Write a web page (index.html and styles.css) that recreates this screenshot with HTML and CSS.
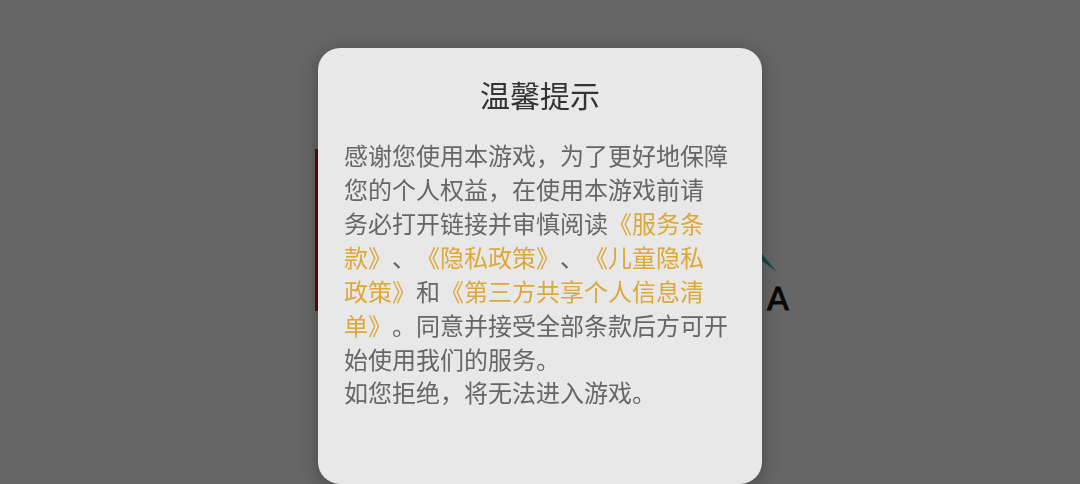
FILE: index.html
```html
<!DOCTYPE html>
<html lang="zh-CN">
<head>
  <meta charset="UTF-8" />
  <meta name="viewport" content="width=device-width, initial-scale=1" />
  <title>温馨提示</title>
  <link rel="stylesheet" href="styles.css">
</head>
<body>
  <!-- Splash logo behind the dialog -->
  <div class="splash">
    <svg class="splash-logo" viewBox="0 0 484 164" aria-hidden="true">
      <rect class="logo-block" x="17" y="0" width="160" height="162" />
      <path class="logo-peak" d="M440 76 L464 105 L478 122 L464 112 L440 96 Z" />
      <text class="logo-letter" x="469" y="161">A</text>
    </svg>
  </div>

  <div class="overlay">
    <div class="dialog" role="dialog" aria-modal="true" aria-labelledby="dialogTitle">
      <h1 class="dialog-title" id="dialogTitle">温馨提示</h1>
      <p class="dialog-text">
        感谢您使用本游戏，为了更好地保障<br>您的个人权益，在使用本游戏前请<br>务必打开链接并审慎阅读<a href="#terms">《服务条<br>款》</a>、<a href="#privacy">《隐私政策》</a>、<a href="#children">《儿童隐私<br>政策》</a>和<a href="#sharing">《第三方共享个人信息清<br>单》</a>。同意并接受全部条款后方可开<br>始使用我们的服务。
      </p>
      <p class="dialog-text dialog-note">如您拒绝，将无法进入游戏。</p>
    </div>
  </div>
</body>
</html>
```

FILE: styles.css
```css
* {
  box-sizing: border-box;
}

body {
  margin: 0;
  background: #666666;
  font-family: "Noto Sans CJK SC", sans-serif;
}

/* Splash screen */
.splash {
  min-height: 100vh;
  padding-top: 149px;
  display: flex;
  justify-content: center;
  align-items: flex-start;
}

.splash-logo {
  width: 484px;
  height: 164px;
  overflow: visible;
}

.logo-block {
  fill: #5c0a12;
}

.logo-peak {
  fill: #134a4a;
}

.logo-letter {
  fill: #080808;
  stroke: #080808;
  stroke-width: 1px;
  font-family: "DejaVu Sans", sans-serif;
  font-size: 32px;
}

/* Dialog */
.overlay {
  position: fixed;
  inset: 0;
  padding-top: 48px;
  display: flex;
  justify-content: center;
  align-items: flex-start;
  overflow: hidden;
}

.dialog {
  width: 444px;
  max-width: 100%;
  padding: 24px 26px 76px;
  background: #e8e8e8;
  border-radius: 22px;
  box-shadow: 0 4px 20px rgba(0, 0, 0, 0.3);
}

.dialog-title {
  margin: 0 0 22px;
  font-size: 30px;
  line-height: 44px;
  font-weight: 400;
  text-align: center;
  color: #333333;
}

.dialog-text {
  margin: 0;
  font-size: 24px;
  line-height: 34px;
  font-weight: 400;
  text-spacing-trim: space-all;
  white-space: nowrap;
  color: #666666;
}

.dialog-text a {
  color: #dca83a;
  text-decoration: none;
}

.dialog-note {
  line-height: 32px;
}
```
